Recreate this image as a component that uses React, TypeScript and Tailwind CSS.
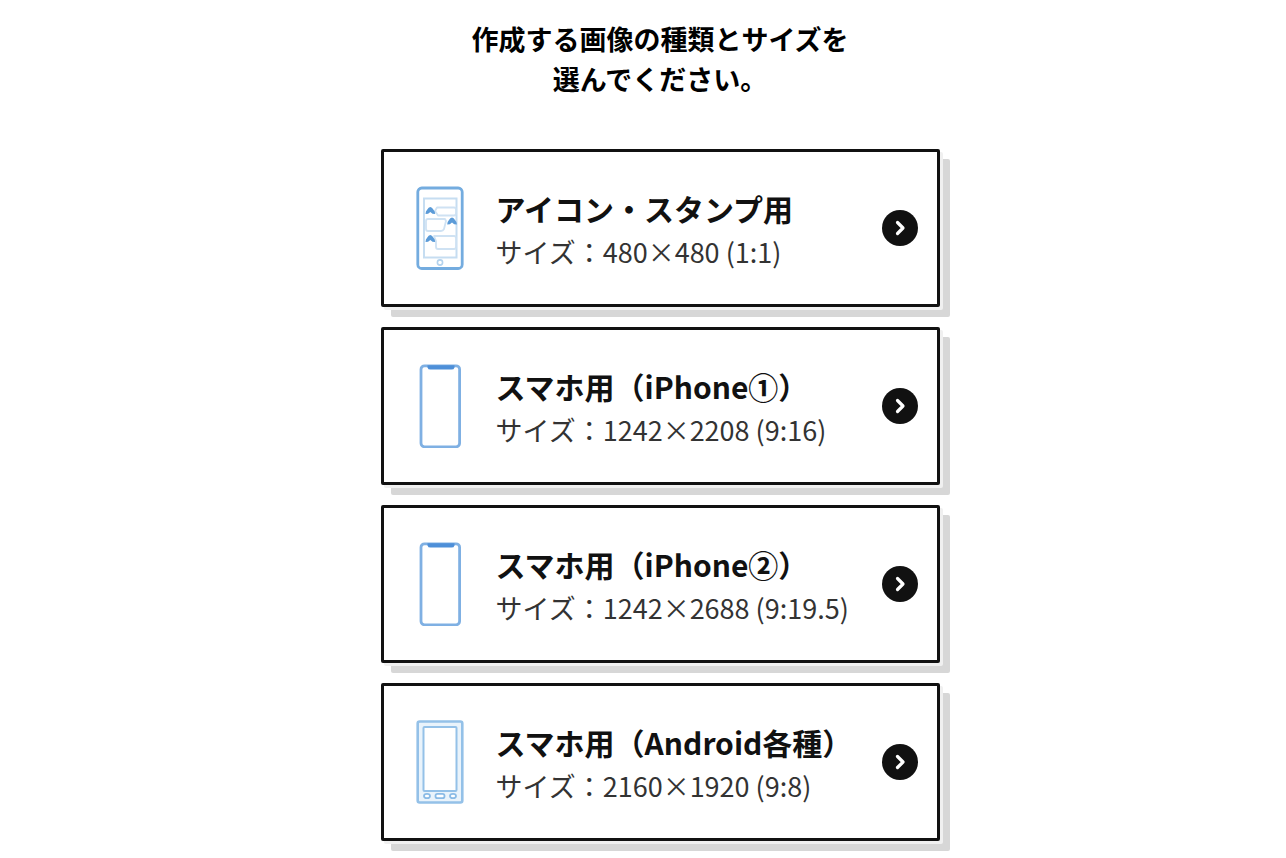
import React from "react";

type Kind = "chat" | "iphone" | "android";

interface Option {
  title: string;
  size: string;
  kind: Kind;
}

const options: Option[] = [
  { title: "アイコン・スタンプ用", size: "サイズ：480×480 (1:1)", kind: "chat" },
  { title: "スマホ用（iPhone①）", size: "サイズ：1242×2208 (9:16)", kind: "iphone" },
  { title: "スマホ用（iPhone②）", size: "サイズ：1242×2688 (9:19.5)", kind: "iphone" },
  { title: "スマホ用（Android各種）", size: "サイズ：2160×1920 (9:8)", kind: "android" },
];

function ChatPhone() {
  return (
    <svg width="48" height="84" viewBox="0 0 48 84" fill="none" aria-hidden="true">
      <rect x="1.8" y="2" width="44.4" height="80.5" rx="4" stroke="#74acdf" strokeWidth="2.8" />
      <rect x="8" y="12.5" width="32.5" height="59" stroke="#c6ddf1" strokeWidth="2" />
      <g stroke="#cfe2f3" strokeWidth="1.8" strokeLinejoin="round">
        <path d="M19 25l2-3.500h17q2 0 2 2v4q0 2-2 2H22z" fill="#fff" />
        <path d="M10 35q0-2 2-2h17l1 2-2 8q-1 2-3 2H12q-2 0-2-2z" fill="#fff" />
        <path d="M18 50h20q2 0 2 2v9q0 2-2 2H22q-2 0-2-2v-6z" fill="#fff" />
      </g>
      <g fill="#5b9bd8">
        <path d="M9.500 28q0-3 1.800-4.500 1.200-2.500 3-2.500t3 2.500q1.900 1.500 1.900 4.500l-2.700-.2-2.200-1.800-2.200 1.800z" />
        <path d="M31.200 38.500q0-3 1.800-4.500 1.200-2.500 3-2.500t3 2.500q1.900 1.500 1.900 4.500l-2.700-.2-2.200-1.800-2.200 1.800z" />
        <path d="M9.500 56q0-3 1.800-4.500 1.200-2.500 3-2.500t3 2.500q1.900 1.500 1.900 4.500l-2.700-.2-2.200-1.800-2.200 1.800z" />
      </g>
      <circle cx="24" cy="76.5" r="2.6" stroke="#b3d2ed" strokeWidth="1.6" />
    </svg>
  );
}

function IPhone() {
  return (
    <svg width="48" height="84" viewBox="0 0 48 84" fill="none" aria-hidden="true">
      <rect x="5" y="1.8" width="38.6" height="81" rx="3.5" stroke="#7fb0e3" strokeWidth="2.8" />
      <path d="M11.5 1.2h27v2.200q-.5 2.200-3 2.200h-21q-2.500 0-3-2.200z" fill="#4e8fd8" />
    </svg>
  );
}

function AndroidPhone() {
  return (
    <svg width="48" height="84" viewBox="0 0 48 84" fill="none" aria-hidden="true">
      <rect x="1.7" y="1.5" width="44.6" height="81" rx="2" fill="#e9f3fb" stroke="#94c1e8" strokeWidth="2.6" />
      <rect x="7.5" y="7" width="33" height="64" rx="1" fill="#fff" stroke="#94c1e8" strokeWidth="2" />
      <g stroke="#8abbe6" strokeWidth="1.8" fill="#fff">
        <ellipse cx="11" cy="76" rx="3" ry="2.2" />
        <rect x="19.5" y="73.8" width="9" height="4.4" rx="2" />
        <ellipse cx="37" cy="76" rx="3" ry="2.2" />
      </g>
    </svg>
  );
}

const icons: Record<Kind, () => React.JSX.Element> = {
  chat: ChatPhone,
  iphone: IPhone,
  android: AndroidPhone,
};

function OptionCard({ title, size, kind }: Option) {
  const Icon = icons[kind];
  return (
    <button
      type="button"
      className="flex w-full items-center rounded-[2px] border-3 border-[#111] bg-white py-8 pr-[19px] pl-8 text-left shadow-[3px_3px_0_#f0f0f0,10px_10px_0_#d7d7d7]"
    >
      <span className="shrink-0">
        <Icon />
      </span>
      <span className="ml-8 flex-1">
        <span className="block text-[30px] leading-[48px] font-bold text-[#111]">{title}</span>
        <span className="block text-[27px] leading-[40px] text-[#333]">{size}</span>
      </span>
      <svg className="shrink-0" width="36" height="36" viewBox="0 0 36 36" fill="none" aria-hidden="true">
        <circle cx="18" cy="18" r="18" fill="#111" />
        <path d="M15.5 12.5L21 18l-5.5 5.5" stroke="#fff" strokeWidth="3.2" strokeLinecap="round" strokeLinejoin="round" />
      </svg>
    </button>
  );
}

export default function App() {
  return (
    <main lang="ja" className="bg-white pt-[19px] pb-5 pl-[34px] font-['Noto_Sans_CJK_JP',sans-serif]">
      <div className="mx-auto max-w-[559px]">
        <h1 className="text-center text-[27px] leading-10 font-bold text-black">
          作成する画像の種類とサイズを
          <br />
          選んでください。
        </h1>
        <ul className="mt-[50px] flex flex-col gap-5">
          {options.map((option) => (
            <li key={option.title}>
              <OptionCard {...option} />
            </li>
          ))}
        </ul>
      </div>
    </main>
  );
}
